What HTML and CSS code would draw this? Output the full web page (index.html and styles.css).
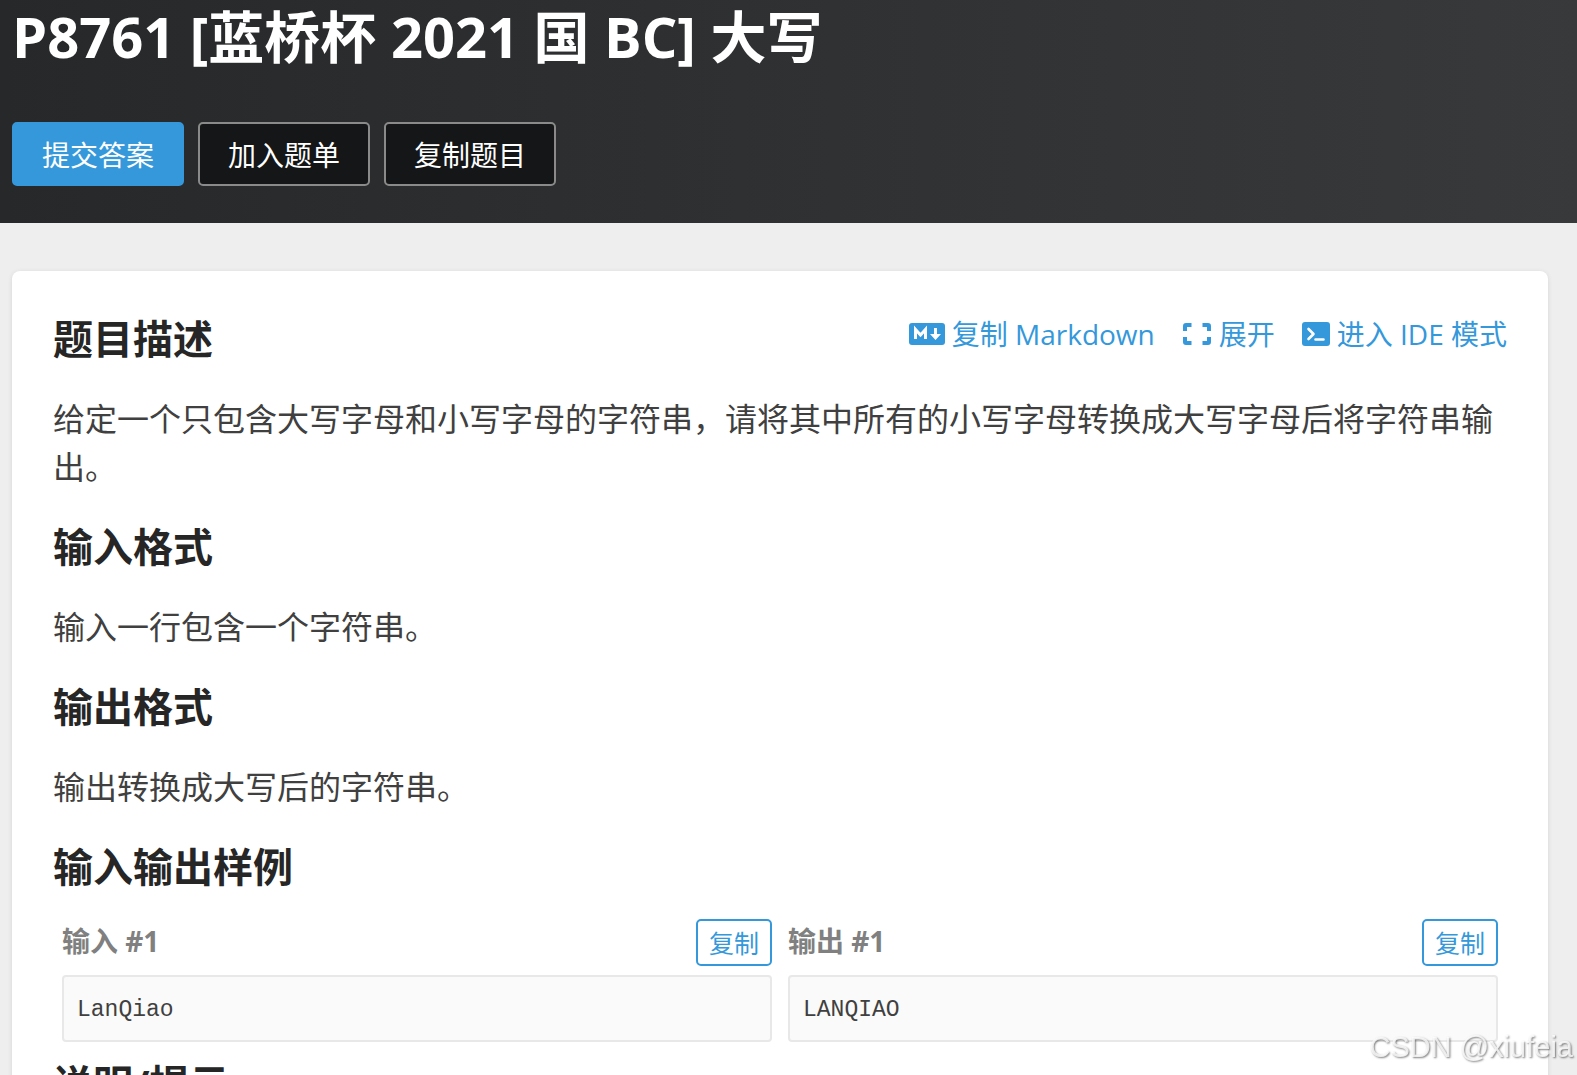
FILE: index.html
```html
<!DOCTYPE html>
<html lang="zh-CN">
<head>
  <meta charset="UTF-8">
  <meta name="viewport" content="width=device-width, initial-scale=1.0">
  <title>P8761 [蓝桥杯 2021 国 BC] 大写</title>
  <link rel="stylesheet" href="styles.css">
</head>
<body>
  <header class="header">
    <h1>P8761 [蓝桥杯 2021 国 BC] 大写</h1>
    <div class="operation">
      <button class="btn btn-primary" type="button">提交答案</button>
      <button class="btn" type="button">加入题单</button>
      <button class="btn" type="button">复制题目</button>
    </div>
  </header>

  <main class="card">
    <div class="card-top">
      <h2>题目描述</h2>
      <nav class="actions">
        <a href="#">
          <svg width="36" height="24" viewBox="0 0 36 24">
            <rect y="1" width="36" height="22" rx="3" fill="currentColor"/>
            <path d="M6.500 17V7.500L11.500 13L16.500 7.500V17" fill="none" stroke="#fff" stroke-width="3"/>
            <path d="M25 6h3v6h4l-5.500 6-5.500-6h4z" fill="#fff"/>
          </svg>
          复制 Markdown
        </a>
        <a href="#">
          <svg width="30" height="24" viewBox="0 0 30 24">
            <path d="M9.500 3H4Q3 3 3 4V9M3 15V20Q3 21 4 21H9.500M20.500 3H26Q27 3 27 4V9M27 15V20Q27 21 26 21H20.500" fill="none" stroke="currentColor" stroke-width="4"/>
          </svg>
          展开
        </a>
        <a href="#">
          <svg width="28" height="26" viewBox="0 0 28 26">
            <rect y="1" width="28" height="24" rx="3" fill="currentColor"/>
            <path d="M6.500 8L11.500 13L6.500 18M13.500 18.500H21.500" fill="none" stroke="#fff" stroke-width="2.600" stroke-linecap="round" stroke-linejoin="round"/>
          </svg>
          进入 IDE 模式
        </a>
      </nav>
    </div>
    <p>给定一个只包含大写字母和小写字母的字符串，请将其中所有的小写字母转换成大写字母后将字符串输出。</p>

    <h2>输入格式</h2>
    <p>输入一行包含一个字符串。</p>

    <h2>输出格式</h2>
    <p>输出转换成大写后的字符串。</p>

    <h2>输入输出样例</h2>
    <div class="samples">
      <section class="sample">
        <div class="sample-title">
          <h3>输入 #1</h3>
          <button class="copy-btn" type="button">复制</button>
        </div>
        <pre>LanQiao</pre>
      </section>
      <section class="sample">
        <div class="sample-title">
          <h3>输出 #1</h3>
          <button class="copy-btn" type="button">复制</button>
        </div>
        <pre>LANQIAO</pre>
      </section>
    </div>

    <h2>说明/提示</h2>
  </main>

  <div class="watermark">CSDN @xiufeia</div>
</body>
</html>
```
FILE: styles.css
```css
* {
  box-sizing: border-box;
}
body {
  margin: 0;
  height: 100vh;
  overflow: hidden;
  background: #eee;
  color: #404040;
  font-family: "Open Sans", "Noto Sans CJK SC", sans-serif;
}
h1, h2, h3, p, pre {
  margin: 0;
}
.header {
  padding: 0 12px 37px;
  background: linear-gradient(to right, #27282a, #38393b);
  color: #fff;
}
h1 {
  font-size: 56px;
  line-height: 72px;
}
.operation {
  display: flex;
  gap: 14px;
  margin-top: 50px;
}
.btn {
  height: 64px;
  padding: 0 28px;
  border: 2px solid #8a8a8a;
  border-radius: 5px;
  background: #151617;
  color: #fff;
  font-family: inherit;
  font-size: 28px;
  cursor: pointer;
}
.btn-primary {
  background: #3498db;
  border-color: #3498db;
}
.card {
  margin: 48px 29px 0 12px;
  padding: 44px 41px;
  background: #fff;
  border-radius: 8px;
  box-shadow: 0 1px 5px rgba(0, 0, 0, 0.1);
}
.card-top {
  display: flex;
  justify-content: space-between;
}
h2 {
  color: #262626;
  font-size: 40px;
  line-height: 48px;
}
.actions {
  display: flex;
  gap: 27px;
  height: 38px;
}
.actions a {
  display: flex;
  align-items: center;
  gap: 7px;
  color: #3498db;
  font-size: 28px;
  line-height: 38px;
  text-decoration: none;
}
.card p {
  margin: 32px 0;
  font-size: 32px;
  line-height: 48px;
}
.samples {
  display: grid;
  grid-template-columns: 1fr 1fr;
  gap: 16px;
  margin: 28px 9px 18px;
}
.sample-title {
  display: flex;
  justify-content: space-between;
  margin-bottom: 9px;
}
h3 {
  color: #808080;
  font-size: 28px;
  line-height: 44px;
}
.copy-btn {
  height: 47px;
  padding: 0 11px;
  border: 2px solid #3498db;
  border-radius: 5px;
  background: #fff;
  color: #3498db;
  font-family: inherit;
  font-size: 25px;
  line-height: 40px;
  cursor: pointer;
}
pre {
  padding: 16px 13px 12px;
  border: 2px solid #e8e8e8;
  border-radius: 4px;
  background: #fafafa;
  font-family: "Liberation Mono", monospace;
  font-size: 23px;
  line-height: 35px;
}
.watermark {
  position: fixed;
  right: 4px;
  bottom: 8px;
  color: rgba(255, 255, 255, 0.8);
  font-family: "Liberation Sans", sans-serif;
  font-size: 29px;
  line-height: 40px;
  text-shadow: 1px 1px 2px rgba(0, 0, 0, 0.5);
}
```
